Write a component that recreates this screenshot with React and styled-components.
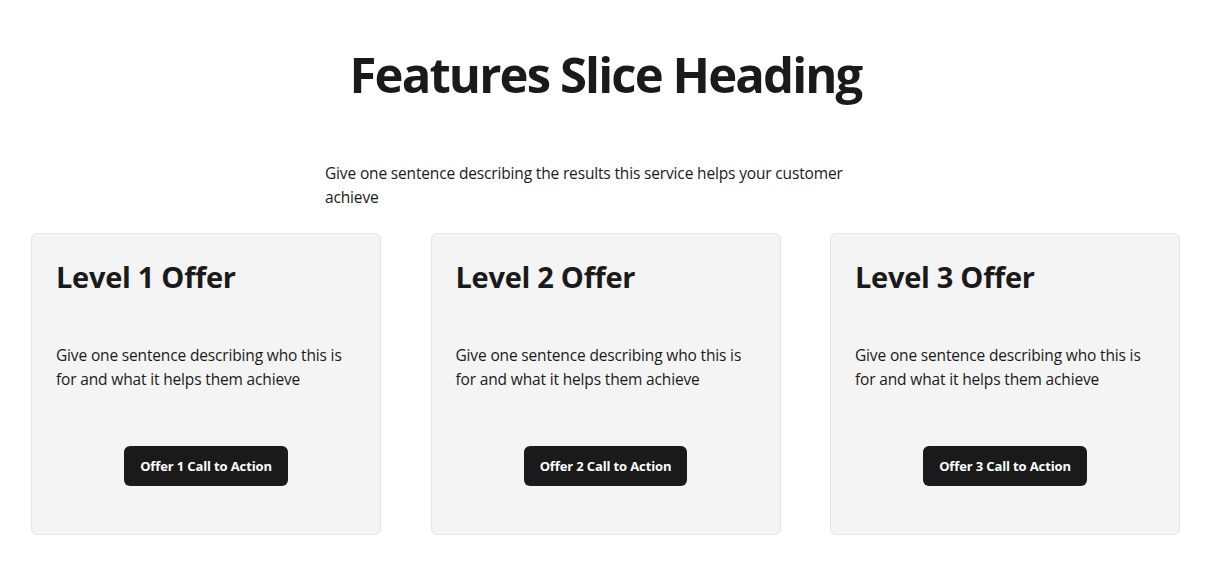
import React from 'react'
import styled, { createGlobalStyle } from 'styled-components'

const GlobalStyle = createGlobalStyle`
    body{margin: 0; background: #fff; color: #1a1a1a; font-family: "Open Sans", "Noto Sans", sans-serif;}
    *{box-sizing: border-box;}
`

const Section = styled.section`
    width: 1149px; margin: 0 auto; padding-top: 42px; padding-bottom: 40px;
`

const Heading = styled.h1`
    margin: 0; text-align: center; font-size: 49px; line-height: 65px; font-weight: 700; color: #1a1a1a; letter-spacing: -0.038em;
`

const Lead = styled.p`
    width: 561px; margin: 54px auto 24px; font-size: 15.5px; line-height: 24px; letter-spacing: -0.01em;
`

const Cards = styled.div`
    display: grid; grid-template-columns: repeat(3, 350px); justify-content: space-between;
`

const Card = styled.div`
    background: #f4f4f4; border: 1px solid #e4e4e4; border-radius: 6px; padding: 24px;
    display: flex; flex-direction: column; height: 302px;
    h2{margin: 0; font-size: 29px; line-height: 38px; font-weight: 700; letter-spacing: -0.01em;}
    p{margin: 47px 0 0; font-size: 15.5px; line-height: 24px; letter-spacing: -0.01em;}
`

const Action = styled.button`
    align-self: center; margin-top: 55px; height: 40px; padding: 0 16px; border: 0; border-radius: 6px;
    background: #1a1a1a; color: #fff; font-family: inherit; font-size: 13px; font-weight: 700; letter-spacing: -0.01em; cursor: pointer;
`

const offers = [1, 2, 3]

function App() {
    return (
        <>
            <GlobalStyle />
            <Section>
                <Heading>Features Slice Heading</Heading>
                <Lead>Give one sentence describing the results this service helps your customer achieve</Lead>
                <Cards>
                    {offers.map(n => (
                        <Card key={n}>
                            <h2>Level {n} Offer</h2>
                            <p>Give one sentence describing who this is for and what it helps them achieve</p>
                            <Action>Offer {n} Call to Action</Action>
                        </Card>
                    ))}
                </Cards>
            </Section>
        </>
    )
}

export default App
